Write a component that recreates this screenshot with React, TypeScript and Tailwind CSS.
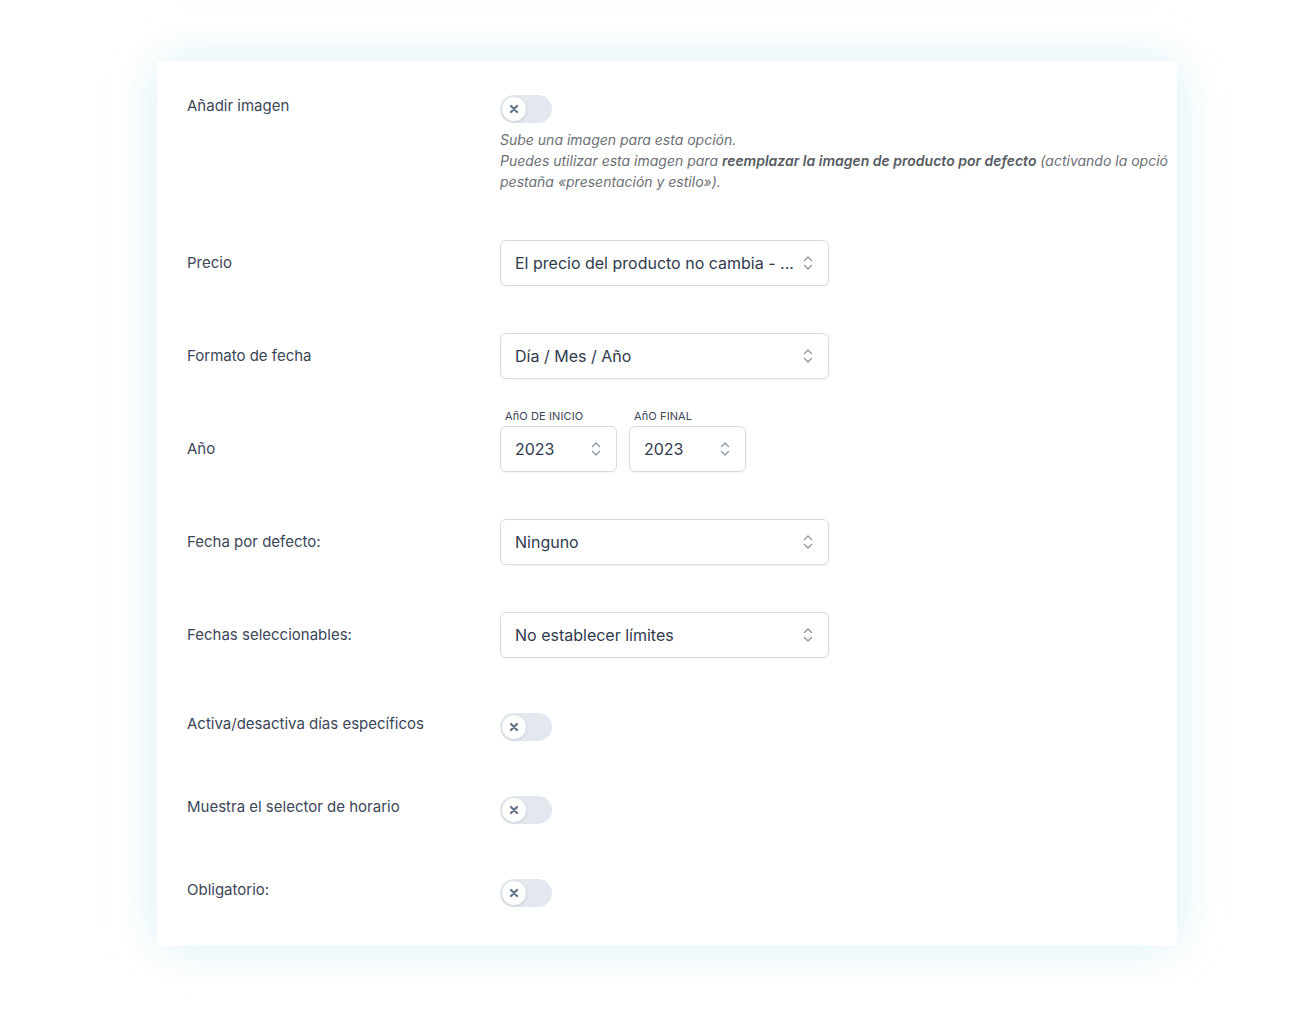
import { ReactNode } from "react";

const font = { fontFamily: "Inter, 'Noto Sans', sans-serif" };

function Toggle() {
    return (
        <div className="w-[52px] h-[28px] rounded-full bg-[#e3e8ef] flex items-center">
            <div className="w-[26px] h-[26px] ml-px rounded-full bg-white border border-[#d9dfe7] shadow-[0_1px_2px_rgba(0,0,0,0.08)] flex items-center justify-center">
                <svg width="10" height="10" viewBox="0 0 10 10" fill="none">
                    <path d="M2 2l6 6M8 2l-6 6" stroke="#66758c" strokeWidth="2.3" strokeLinecap="round" />
                </svg>
            </div>
        </div>
    );
}

function Chevrons() {
    return (
        <svg width="12" height="18" viewBox="0 0 12 18" fill="none">
            <path d="M2.5 6.5L6 3l3.5 3.5M2.5 11.5L6 15l3.5-3.5" stroke="#8a95a6" strokeWidth="1.3" strokeLinecap="round" strokeLinejoin="round" />
        </svg>
    );
}

function Select({ value, width = "w-[329px]" }: { value: string; width?: string }) {
    return (
        <div className={`${width} h-[46px] rounded-[6px] border border-[#d6dce4] bg-white shadow-[0_1px_2px_rgba(30,50,80,0.06)] flex items-center justify-between pl-[14px] pr-[14px]`}>
            <span className="text-[16px] text-[#2f3b4d] whitespace-nowrap">{value}</span>
            <Chevrons />
        </div>
    );
}

function Row({ label, children, className = "", align = "center" }: { label: string; children: ReactNode; className?: string; align?: "center" | "start" }) {
    return (
        <div className={`flex ${align === "center" ? "items-center" : "items-start"} ${className}`}>
            <div className="w-[313px] shrink-0 text-[15px] leading-[22px] text-[#3b4657]">{label}</div>
            <div className="min-w-0 flex-1">{children}</div>
        </div>
    );
}

export default function App() {
    return (
        <div className="min-h-[1016px] bg-white pt-[61px] pl-[157px]" style={font}>
            <div className="w-[1020px] h-[885px] bg-white shadow-[0_0_45px_rgba(170,220,235,0.45)] pl-[30px] pr-[9px] pt-[34px] overflow-hidden">
                <Row label="Añadir imagen" align="start">
                    <Toggle />
                    <div className="mt-[6px] text-[14px] leading-[21px] italic text-[#6b6f76] overflow-hidden">
                        <p>Sube una imagen para esta opción.</p>
                        <p className="whitespace-nowrap">
                            Puedes utilizar esta imagen para <b className="font-semibold text-[#555a61]">reemplazar la imagen de producto por defecto</b> (activando la opción en la
                        </p>
                        <p>pestaña «presentación y estilo»).</p>
                    </div>
                </Row>

                <Row label="Precio" className="mt-[48px]">
                    <Select value="El precio del producto no cambia - ..." />
                </Row>

                <Row label="Formato de fecha" className="mt-[47px]">
                    <Select value="Día / Mes / Año" />
                </Row>

                <div className="mt-[28px] flex items-end">
                    <div className="w-[313px] shrink-0 h-[46px] flex items-center text-[15px] text-[#3b4657]">Año</div>
                    <div className="flex gap-[12px]">
                        <div>
                            <div className="text-[11px] leading-[18px] text-[#3b4657] pl-[5px] mb-[1px] tracking-[0.01em]">AñO DE INICIO</div>
                            <Select value="2023" width="w-[117px]" />
                        </div>
                        <div>
                            <div className="text-[11px] leading-[18px] text-[#3b4657] pl-[5px] mb-[1px] tracking-[0.01em]">AñO FINAL</div>
                            <Select value="2023" width="w-[117px]" />
                        </div>
                    </div>
                </div>

                <Row label="Fecha por defecto:" className="mt-[47px]">
                    <Select value="Ninguno" />
                </Row>

                <Row label="Fechas seleccionables:" className="mt-[47px]">
                    <Select value="No establecer límites" />
                </Row>

                <Row label="Activa/desactiva días específicos" align="start" className="mt-[55px]">
                    <Toggle />
                </Row>

                <Row label="Muestra el selector de horario" align="start" className="mt-[55px]">
                    <Toggle />
                </Row>

                <Row label="Obligatorio:" align="start" className="mt-[55px]">
                    <Toggle />
                </Row>
            </div>
        </div>
    );
}
